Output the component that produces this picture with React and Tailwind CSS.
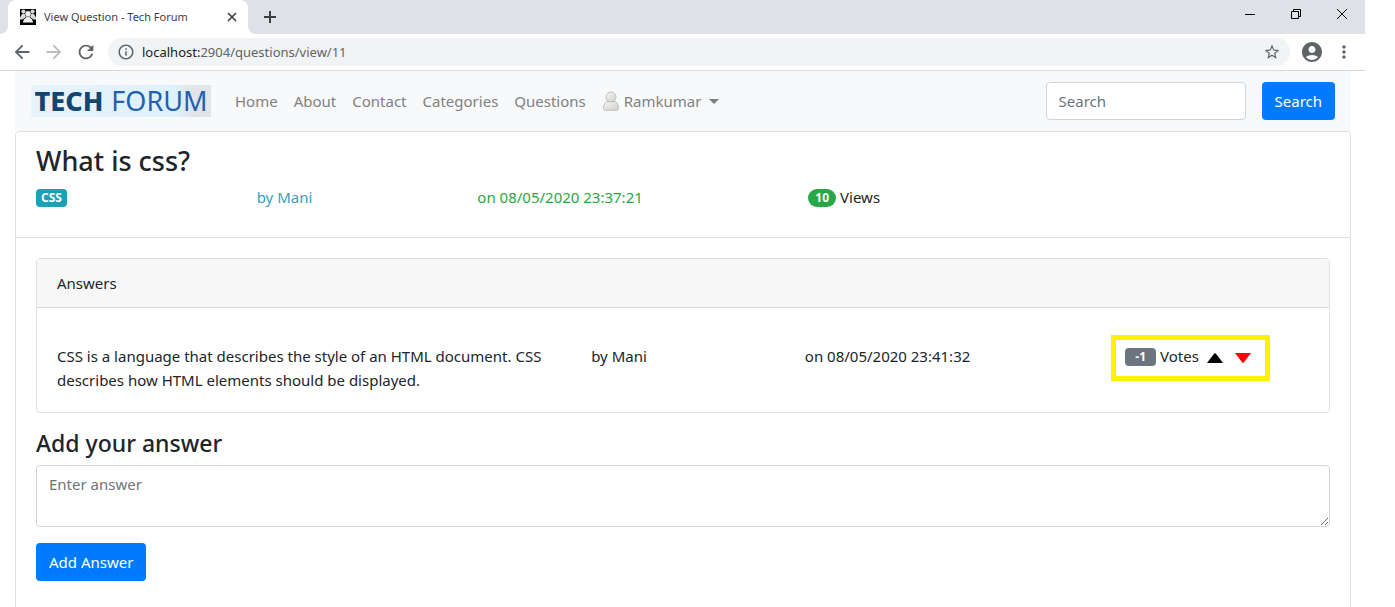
import {
  MdAccountCircle,
  MdArrowBack,
  MdArrowForward,
  MdInfoOutline,
  MdMoreVert,
  MdRefresh,
  MdStarBorder,
} from "react-icons/md";

function Favicon() {
  return (
    <svg viewBox="0 0 16 16" className="size-4 shrink-0" aria-hidden="true">
      <rect width="16" height="16" fill="#000" />
      <g fill="#d9d9d9">
        <circle cx="3.4" cy="2.6" r="2.1" />
        <circle cx="12.6" cy="2.6" r="2.1" />
        <path d="M0 8.500 2 5h3L6 8l-3.500 2.500H0z" />
        <path d="M16 8.500 14 5h-3L10 8l3.500 2.500H16z" />
      </g>
      <g fill="#f2f2f2">
        <path d="M3 13.500c0-2.500 1.500-3.800 3.200-4.800V7h3.600v1.700c1.700 1 3.200 2.300 3.200 4.800z" />
        <circle cx="8" cy="4.800" r="3" stroke="#333" strokeWidth=".5" />
      </g>
    </svg>
  );
}

function TabStrip() {
  return (
    <div className="flex h-[34px] bg-[#dee1e6]">
      <svg viewBox="0 0 8 34" className="h-full w-2 shrink-0" aria-hidden="true">
        <path d="M8 26a8 8 0 0 1-8 8h8z" fill="#fff" />
      </svg>
      <div className="flex w-60 items-center rounded-t-lg bg-white pr-[10px] pl-3">
        <Favicon />
        <span className="ml-2 flex-1 whitespace-nowrap text-[11px] text-[#3c4043]">
          View Question - Tech Forum
        </span>
        <button aria-label="Close tab" className="flex size-3 items-center justify-center">
          <svg viewBox="0 0 12 12" className="size-3" stroke="#3c4043" strokeWidth="1.700">
            <path d="M2 2l8 8M10 2l-8 8" />
          </svg>
        </button>
      </div>
      <svg viewBox="0 0 8 34" className="h-full w-2 shrink-0" aria-hidden="true">
        <path d="M0 26a8 8 0 0 0 8 8H0z" fill="#fff" />
      </svg>
      <button aria-label="New tab" className="flex w-7 items-center justify-center">
        <svg viewBox="0 0 12 12" className="size-3" stroke="#3c4043" strokeWidth="2">
          <path d="M6 0v12M0 6h12" />
        </svg>
      </button>
      <div className="ml-auto flex h-7">
        <button aria-label="Minimize" className="flex w-[46px] items-center justify-center">
          <svg viewBox="0 0 10 10" className="size-[10px]" shapeRendering="crispEdges">
            <path d="M0 5h10v1H0z" />
          </svg>
        </button>
        <button aria-label="Restore" className="flex w-[46px] items-center justify-center">
          <svg viewBox="0 0 10 10" className="size-[10px]" fill="none" stroke="#000">
            <path d="M.5 2.500h7v7h-7zM2.500 2.500v-2h7v7h-2" />
          </svg>
        </button>
        <button aria-label="Close" className="flex w-[46px] items-center justify-center">
          <svg viewBox="0 0 10 10" className="size-[10px]" fill="none" stroke="#000">
            <path d="M0 0l10 10M10 0L0 10" />
          </svg>
        </button>
      </div>
    </div>
  );
}

function Toolbar() {
  return (
    <div className="flex h-[37px] items-center border-b border-[#d5d7da] pr-[5px] pl-[6px] text-[#5f6368]">
      <button aria-label="Back" className="flex w-8 justify-center">
        <MdArrowBack size={22} />
      </button>
      <button aria-label="Forward" className="flex w-8 justify-center text-[#babcbe]">
        <MdArrowForward size={22} />
      </button>
      <button aria-label="Reload" className="flex w-8 justify-center">
        <MdRefresh size={22} />
      </button>
      <div className="mx-[6px] flex h-7 flex-1 items-center rounded-full bg-[#f1f3f4] px-[9px]">
        <MdInfoOutline size={18} />
        <div className="ml-[7px] flex-1 text-[13px]">
          <span className="text-[#202124]">localhost:</span>2904/questions/view/11
        </div>
        <button aria-label="Bookmark this page">
          <MdStarBorder size={18} />
        </button>
      </div>
      <button aria-label="Profile" className="flex w-8 justify-center">
        <MdAccountCircle size={24} />
      </button>
      <button aria-label="Menu" className="flex w-8 justify-center">
        <MdMoreVert size={20} />
      </button>
    </div>
  );
}

function Logo() {
  return (
    <a
      href="#"
      aria-label="Tech Forum"
      className="mr-4 flex h-8 w-[180px] items-center justify-center gap-2 bg-linear-to-r from-[#e8f3fa] from-0% via-[#def1fb] via-80% to-[#e3e4e7] to-90% text-[27px] leading-8 whitespace-nowrap"
    >
      <span className="font-extrabold text-[#14456f]">TECH</span>
      <span className="text-[#2260b0]">FORUM</span>
    </a>
  );
}

function UserIcon() {
  return (
    <svg viewBox="0 0 17 20" className="mr-1 h-5 w-[18px]" aria-hidden="true">
      <defs>
        <linearGradient id="user" x1="0" y1="0" x2="1" y2="1">
          <stop offset="0" stopColor="#f6f6f5" />
          <stop offset="1" stopColor="#cfcfcc" />
        </linearGradient>
      </defs>
      <g fill="url(#user)" stroke="#b8b8b6" strokeWidth=".9">
        <path d="M1 17.300c0-3.800 1.300-6.300 3.800-6.800h7.400c2.500.5 3.800 3 3.800 6.800 0 1.200-.8 1.900-2 1.900H3c-1.200 0-2-.7-2-1.900z" />
        <circle cx="8.500" cy="6" r="5" />
      </g>
    </svg>
  );
}

function Navbar() {
  return (
    <nav className="flex h-[60px] items-center bg-[#f8f9fa] px-4">
      <Logo />
      {["Home", "About", "Contact", "Categories", "Questions"].map((label) => (
        <a key={label} href="#" className="px-2 text-[#808181]">
          {label}
        </a>
      ))}
      <button className="flex items-center px-2 text-[#808181]">
        <UserIcon />
        Ramkumar
        <svg viewBox="0 0 10 5" className="ml-2 h-[5px] w-[10px] fill-[#7c7d7d]" aria-hidden="true">
          <path d="M0 0h10L5 5z" />
        </svg>
      </button>
      <form className="ml-auto flex gap-4" onSubmit={(e) => e.preventDefault()}>
        <input
          type="search"
          aria-label="Search"
          placeholder="Search"
          className="h-[38px] w-[200px] rounded border border-[#ced4da] bg-white px-3 placeholder:text-[#6c757d]"
        />
        <button className="h-[38px] rounded bg-[#007bff] px-[13px] text-white">Search</button>
      </form>
    </nav>
  );
}

function QuestionHeader() {
  return (
    <header className="border-b border-[#dfdfdf] px-5 pt-3 pb-7">
      <h1 className="mb-[7px] text-[27px] leading-[34px] font-medium">What is css?</h1>
      <div className="-mx-[15px] grid grid-cols-12 *:px-[15px]">
        <div className="col-span-2 flex items-center">
          <span className="mt-px rounded bg-[#17a2b8] px-[5px] text-[12px] leading-[18px] font-bold text-white">
            CSS
          </span>
        </div>
        <div className="col-span-2 text-[#3a9fb8]">by Mani</div>
        <div className="col-span-3 text-[#28a745]">on 08/05/2020 23:37:21</div>
        <div className="col-span-3 flex items-center gap-1">
          <span className="mt-px rounded-full bg-[#28a745] px-[7px] text-[12px] leading-[18px] font-bold text-white">
            10
          </span>
          Views
        </div>
      </div>
    </header>
  );
}

function Answers() {
  return (
    <section className="rounded border border-[#dfdfdf]">
      <h2 className="border-b border-[#d9d9d9] bg-[#f7f7f7] px-5 py-3">Answers</h2>
      <div className="px-5 pt-9 pb-5">
        <div className="-mx-[15px] grid grid-cols-12 *:px-[15px]">
          <p className="col-span-5">
            CSS is a language that describes the style of an HTML document. CSS describes how HTML
            elements should be displayed.
          </p>
          <div className="col-span-2">by Mani</div>
          <div className="col-span-3">on 08/05/2020 23:41:32</div>
          <div className="col-span-2">
            <div className="relative flex h-6 items-center">
              <span className="mt-px rounded bg-[#6c757d] px-[10px] text-[12px] leading-[18px] font-bold text-white">
                -1
              </span>
              <span className="ml-1">Votes</span>
              <button aria-label="Vote up" className="ml-2 pt-1">
                <svg viewBox="0 0 16 10" className="h-[10px] w-4">
                  <path d="M0 10h16L9 .8a1.300 1.300 0 0 0-2 0z" />
                </svg>
              </button>
              <button aria-label="Vote down" className="ml-3 pt-1">
                <svg viewBox="0 0 16 10" className="h-[10px] w-4 fill-[#f00]">
                  <path d="M0 0h16L9 9.200a1.300 1.300 0 0 1-2 0z" />
                </svg>
              </button>
              <div className="pointer-events-none absolute -top-[9px] -left-[14px] h-[46px] w-[159px] border-[5px] border-[#fff200]" />
            </div>
          </div>
        </div>
      </div>
    </section>
  );
}

function AnswerForm() {
  return (
    <form className="mt-4" onSubmit={(e) => e.preventDefault()}>
      <label htmlFor="answer" className="mb-2 block text-[23px] leading-7 font-medium">
        Add your answer
      </label>
      <textarea
        id="answer"
        placeholder="Enter answer"
        className="block h-[62px] w-full rounded border border-[#ced4da] px-3 py-[6px] placeholder:text-[#6c757d]"
      />
      <button className="mt-4 h-[38px] rounded bg-[#007bff] px-[13px] text-white">Add Answer</button>
    </form>
  );
}

export default function App() {
  return (
    <div className="min-h-screen bg-white font-['Noto_Sans','Open_Sans',sans-serif] text-[15px] leading-6 text-[#212529]">
      <div className="mr-[30px] flex min-h-screen flex-col">
        <TabStrip />
        <Toolbar />
        <div className="flex flex-1 flex-col pr-[14px] pl-[15px]">
          <Navbar />
          <main className="flex-1 rounded-t border border-b-0 border-[#dfdfdf]">
            <QuestionHeader />
            <div className="p-5">
              <Answers />
              <AnswerForm />
            </div>
          </main>
        </div>
      </div>
    </div>
  );
}
